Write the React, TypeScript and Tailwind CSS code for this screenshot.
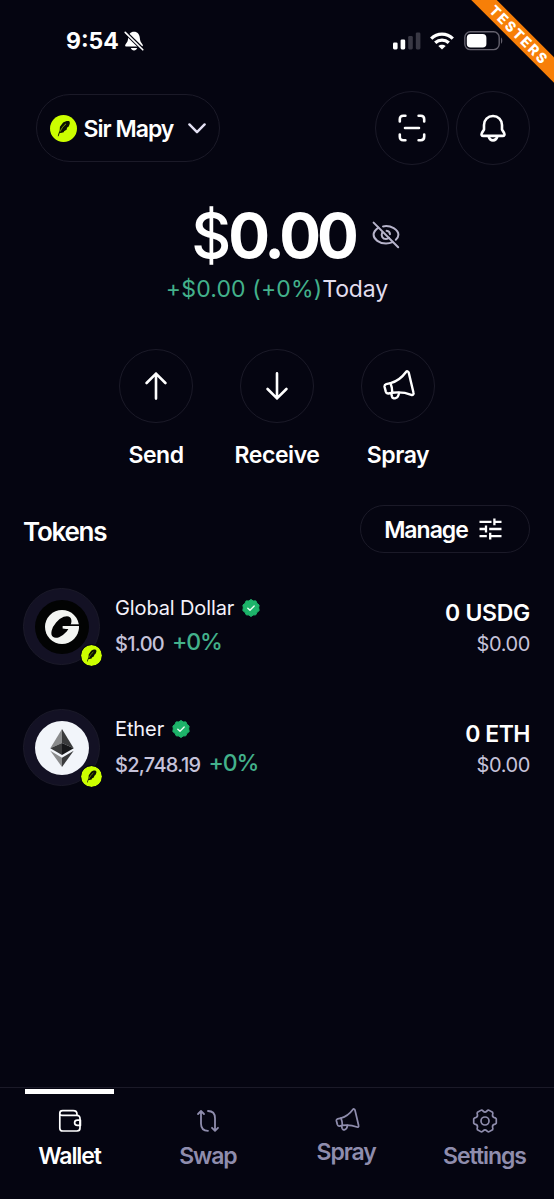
import React from "react";

type IconProps = { className?: string };

const FeatherBadge: React.FC<IconProps> = ({ className }) => (
  <svg viewBox="0 0 28 28" className={className}>
    <circle cx="14" cy="14" r="14" fill="#ccff00" />
    <path
      d="M8 22C8.5 19.8 9.2 17.8 10 16L10.3 12.2L13.6 7.8C15.2 6.6 17.4 6 19.4 6.2C20.5 6.4 20.7 7.6 20.5 9L19.4 11.8L17.6 13.2L17.4 15L14.6 16.8L14.2 18L11.2 18.6L10.2 18.4L8.8 22Z"
      fill="#0b0f00"
    />
    <path d="M10.6 17.2C12 13.8 13.8 11.4 16.6 9.2" fill="none" stroke="#ccff00" strokeWidth="0.6" />
  </svg>
);

const MegaphoneIcon: React.FC<IconProps & { stroke: number }> = ({ className, stroke }) => (
  <svg
    viewBox="0 0 32 30"
    className={className}
    fill="none"
    stroke="currentColor"
    strokeWidth={stroke}
    strokeLinecap="round"
    strokeLinejoin="round"
  >
    <path d="M7.5 13.1C14 11.5 19 7.5 23 2C23.8 .9 25.3 1.1 25.7 2.5L30.5 22.8C30.9 24.3 29.8 25.3 28.3 24.8C22.5 22.6 16 21.9 9.3 22.8L5.4 23.5C4 23.7 3.2 23 2.8 21.6L1.6 17C1.3 15.4 1.8 14.5 3.2 14.1Z" />
    <path d="M7.5 13.2C8.7 16 9.3 19 9.3 22.6" />
    <path d="M8.2 23.3L9 26.6C9.4 28.1 11 28.7 12.5 28.2C14.5 27.6 15.6 26 16 22.8" />
  </svg>
);

const VerifiedIcon: React.FC = () => (
  <svg viewBox="0 0 18 18" className="size-[18px]">
    <path
      d="M9 .5L11.2 1.9L13.9 1.9L15 4.4L17.1 6.1L16.7 8.9L17.2 11.6L15 13.3L13.8 15.8L11.1 16L9 17.5L6.9 16L4.2 15.8L3 13.3L.8 11.6L1.3 8.9L.9 6.1L3 4.4L4.1 1.9L6.8 1.9Z"
      fill="#1db46a"
      stroke="#1db46a"
      strokeLinejoin="round"
    />
    <path d="M5.8 9.2L8 11.2L12.2 7" fill="none" stroke="#e8fff2" strokeWidth="1.4" strokeLinecap="round" strokeLinejoin="round" />
  </svg>
);

const DollarLogo: React.FC = () => (
  <svg viewBox="0 0 54 54" className="size-[54px]">
    <circle cx="27" cy="27" r="27" fill="#020303" />
    <circle cx="27" cy="27" r="17" fill="#f3f5f2" />
    <ellipse cx="26.4" cy="27" rx="13" ry="7" transform="rotate(-49 26.4 27)" fill="#020303" />
    <path d="M28 24.3H45V26.1H28Z" fill="#020303" />
    <path d="M27.6 26.1H44L43.4 29H31L27.6 28.4Z" fill="#f3f5f2" />
  </svg>
);

const EtherLogo: React.FC = () => (
  <svg viewBox="0 0 54 54" className="size-[54px]">
    <circle cx="27" cy="27" r="27" fill="#f2f5fa" />
    <path d="M27 8L15.3 27.2L27 22Z" fill="#8a8b8c" />
    <path d="M27 8L38.7 27.2L27 22Z" fill="#3a3b3c" />
    <path d="M15.3 27.2L27 22V34Z" fill="#3a3b3c" />
    <path d="M38.7 27.2L27 22V34Z" fill="#17181a" />
    <path d="M15.3 29.8L27 36.7V46Z" fill="#8a8b8c" />
    <path d="M38.7 29.8L27 36.7V46Z" fill="#3a3b3c" />
  </svg>
);

const WalletIcon: React.FC = () => (
  <svg viewBox="0 0 24 24" className="size-6" fill="none" stroke="currentColor" strokeWidth="1.7" strokeLinecap="round" strokeLinejoin="round">
    <path d="M1.8 4.2V19.2C1.8 21 3 22 4.8 22H19C21 22 22 20.8 22 19V9.6C22 7.6 21 6.4 19 6.4H4C2.6 6.4 1.8 5.4 1.8 4.2C1.8 2.6 3 1.6 4.6 1.6H15.2C17.6 1.6 19 3 19 5.2V6.4" />
    <path d="M22.4 11.2H19.4C17.6 11.2 16.6 12.3 16.6 13.8S17.6 16.4 19.4 16.4H22.4Z" />
  </svg>
);

const SwapIcon: React.FC = () => (
  <svg viewBox="0 0 24 24" className="size-6" fill="none" stroke="currentColor" strokeWidth="1.8" strokeLinecap="round" strokeLinejoin="round">
    <path d="M2 5L5 2L8 5M5 2.4V14.5C5 19 7.6 21.8 12 21.8" />
    <path d="M16 18.8L19 21.8L22 18.8M19 21.4V9.3C19 4.8 16.4 2 12 2" />
  </svg>
);

// six rounded lobes, one every 60 degrees
const gearPath = () => {
  const at = (deg: number, r: number) => {
    const a = (deg * Math.PI) / 180;
    return `${(12 + r * Math.cos(a)).toFixed(2)} ${(12 + r * Math.sin(a)).toFixed(2)}`;
  };
  let d = `M${at(-11, 11.5)}`;
  for (let deg = 0; deg < 360; deg += 60) {
    d += `L${at(deg + 11, 11.5)}`;
    d += `Q${at(deg + 17, 11.2)} ${at(deg + 20, 9.9)}`;
    d += `Q${at(deg + 30, 8.2)} ${at(deg + 40, 9.9)}`;
    d += `Q${at(deg + 43, 11.2)} ${at(deg + 49, 11.5)}`;
  }
  return `${d}Z`;
};

const GearIcon: React.FC = () => (
  <svg viewBox="0 0 24 24" className="ml-[2px] size-6 overflow-visible" fill="none" stroke="currentColor" strokeWidth="1.7" strokeLinejoin="round">
    <path d={gearPath()} />
    <circle cx="12" cy="12" r="4" />
  </svg>
);

const StatusBar: React.FC = () => (
  <div className="flex h-[82px] items-center justify-between pr-[51px] pl-[66px]">
    <div className="flex items-center gap-[5px]">
      <span className="pt-px text-[23px] leading-none font-bold">9:54</span>
      <svg viewBox="0 0 20 20" className="size-5" fill="#fff">
        <path d="M10 .8C6.4 .8 4.4 3.5 4.2 6.8C4 10 3.2 11.4 1.6 13.2C.6 14.6 1.2 15.6 2.8 15.6H17.2C18.8 15.6 19.4 14.6 18.4 13.2C16.8 11.4 16 10 15.8 6.8C15.6 3.5 13.6 .8 10 .8Z" />
        <path d="M6.8 17H13.2C12.6 18.6 11.5 19.5 10 19.5S7.4 18.6 6.8 17Z" />
        <path d="M0 0L20 19.6" stroke="#050511" strokeWidth="3.8" />
        <path d="M1.2 1.4L18.8 18.8" stroke="#fff" strokeWidth="1.6" strokeLinecap="round" />
      </svg>
    </div>
    <div className="flex items-center">
      <svg viewBox="0 0 28 18" className="h-[18px] w-7" fill="#fff">
        <rect x="0" y="10.5" width="4.6" height="6.9" rx="1.3" />
        <rect x="7.6" y="7.4" width="4.6" height="10" rx="1.3" />
        <rect x="15.2" y="4" width="4.6" height="13.4" rx="1.3" fill="#393844" />
        <rect x="22.8" y=".4" width="4.6" height="17" rx="1.3" fill="#393844" />
      </svg>
      <svg viewBox="0 0 24 18" className="ml-[9px] h-[18px] w-6" fill="none" stroke="#fff" strokeWidth="3.3">
        <path d="M1.2 6.6C7.4 .6 16.6 .6 22.8 6.6" />
        <path d="M5.2 10.8C9.2 7.2 14.8 7.2 18.8 10.8" />
        <path d="M12 17.6L8.3 14C10.4 12.2 13.6 12.2 15.7 14Z" fill="#fff" stroke="none" />
      </svg>
      <svg viewBox="0 0 39 20" className="ml-[10px] h-5 w-[39px]">
        <rect x=".8" y=".8" width="34.4" height="17.8" rx="5.6" fill="none" stroke="#65626e" strokeWidth="1.4" />
        <rect x="2.8" y="2.9" width="19.6" height="13.6" rx="3.8" fill="#fff" />
        <path d="M37 6.6C38.7 7.6 38.7 11.8 37 12.8Z" fill="#65626e" />
      </svg>
    </div>
  </div>
);

const CircleButton: React.FC<{ label: string; children: React.ReactNode }> = ({ label, children }) => (
  <button
    type="button"
    aria-label={label}
    className="flex size-[74px] items-center justify-center rounded-full border-[1.5px] border-[#1b1a28]"
  >
    {children}
  </button>
);

const tokens = [
  { name: "Global Dollar", price: "$1.00", amount: "0 USDG", logo: <DollarLogo />, nameClass: "tracking-[-0.12px]", amountClass: "tracking-[-0.3px]" },
  { name: "Ether", price: "$2,748.19", amount: "0 ETH", logo: <EtherLogo />, nameClass: "tracking-[-0.1px]", amountClass: "tracking-[-0.5px]" },
];

const App: React.FC = () => {
  return (
    <div className="relative flex h-[1199px] w-[554px] flex-col overflow-hidden bg-[#050511] font-['Inter',sans-serif] text-white">
      <div className="absolute top-[26px] left-[449px] flex h-[18px] w-[140px] rotate-45 items-center justify-center bg-[#f77f08] text-[14px] leading-none font-extrabold tracking-[1.9px]">
        TESTERS
      </div>

      <StatusBar />

      <header className="mt-[9px] flex h-[74px] items-center justify-between pr-6 pl-9">
        <button
          type="button"
          className="flex h-[68px] w-[184px] items-center rounded-full border-[1.5px] border-[#1b1a28] pl-[12.5px]"
        >
          <FeatherBadge className="size-[27px]" />
          <span className="ml-[7px] w-[90px] pt-[2px] text-[23px] leading-none font-semibold tracking-[-1px] whitespace-nowrap">
            Sir Mapy
          </span>
          <svg viewBox="0 0 18 11" className="ml-[14px] h-[11px] w-[18px]" fill="none" stroke="#e4e1f4" strokeWidth="2.4" strokeLinecap="round" strokeLinejoin="round">
            <path d="M1.4 1.4L9 9.2L16.6 1.4" />
          </svg>
        </button>
        <div className="flex gap-[7px]">
          <CircleButton label="Scan">
            <svg viewBox="0 0 28 28" className="size-7" fill="none" stroke="#fff" strokeWidth="2.6" strokeLinecap="round">
              <path d="M1.8 7.4V5.2C1.8 3 3 1.8 5.2 1.8H7.4M20.6 1.8H22.8C25 1.8 26.2 3 26.2 5.2V7.4M26.2 20.6V22.8C26.2 25 25 26.2 22.8 26.2H20.6M7.4 26.2H5.2C3 26.2 1.8 25 1.8 22.8V20.6M7 14H21" />
            </svg>
          </CircleButton>
          <CircleButton label="Notifications">
            <svg viewBox="0 0 28 28" className="size-7" fill="none" stroke="#fff" strokeWidth="2.6" strokeLinecap="round" strokeLinejoin="round">
              <path d="M14 2C8.8 2 5 5.8 5 11V15.5L2.9 19C2 20.7 2.7 21.9 4.3 21.9H23.7C25.3 21.9 26 20.7 25.1 19L23 15.5V11C23 5.8 19.2 2 14 2Z" />
              <path d="M9.6 22.4C10.4 25.2 12 26.4 14 26.4S17.6 25.2 18.4 22.4" />
            </svg>
          </CircleButton>
        </div>
      </header>

      <section className="mt-[35px] flex h-[70px] items-center justify-center gap-[17px] pl-[37px]">
        <h1 className="pt-px text-[62px] leading-[70px] font-bold tracking-[-4px]">
          <span className="font-medium tracking-[-3px]">$</span>0.00
        </h1>
        <svg viewBox="0 0 28 28" className="size-7" fill="none" stroke="#b7b4cb" strokeWidth="2" strokeLinecap="round">
          <path d="M1.6 1.6L26.2 26.2" />
          <path d="M6.4 6.6C3.6 8.6 1.6 11.2 1.6 13.8C1.6 18.2 7.4 22.6 14 22.6C16.4 22.6 18.6 22.1 20.6 21.2" />
          <path d="M11 5.4C19 3.8 26.4 9 26.4 13.8C26.4 15.6 25.4 17.4 23.8 18.8" />
          <path d="M10.2 11.6C8.8 14.6 10.4 18 14 18C15.2 18 16.2 17.6 17 16.8M14.6 9.8C16.6 10.1 17.8 11.4 18 13.2" />
        </svg>
      </section>
      <p className="mt-[3px] flex h-[32px] items-center justify-center text-[23px] leading-none whitespace-nowrap">
        <span className="tracking-[0.15px] text-[#43b18b]">+$0.00 (+0%)</span>
        <span className="tracking-[-0.1px] text-[#e2deef]">Today</span>
      </p>

      <div className="mt-[44px] flex justify-center gap-[3px]">
        {[
          {
            label: "Send",
            icon: (
              <svg viewBox="0 0 22 28" className="h-7 w-[22px]" fill="none" stroke="#fff" strokeWidth="2.6" strokeLinecap="round" strokeLinejoin="round">
                <path d="M11 26.6V1.6M1.6 11L11 1.6L20.4 11" />
              </svg>
            ),
          },
          {
            label: "Receive",
            icon: (
              <svg viewBox="0 0 22 28" className="h-7 w-[22px]" fill="none" stroke="#fff" strokeWidth="2.6" strokeLinecap="round" strokeLinejoin="round">
                <path d="M11 1.4V26.4M1.6 17L11 26.4L20.4 17" />
              </svg>
            ),
          },
          { label: "Spray", icon: <MegaphoneIcon className="-mt-[3px] ml-[2px] h-[30px] w-8" stroke={2.4} /> },
        ].map((action) => (
          <div key={action.label} className="flex w-[118px] flex-col items-center">
            <CircleButton label={action.label}>{action.icon}</CircleButton>
            <span className="mt-[20px] text-[23px] leading-[24px] font-semibold tracking-[-0.45px]">
              {action.label}
            </span>
          </div>
        ))}
      </div>

      <div className="mt-[38px] flex h-[48px] items-center justify-between px-6">
        <h2 className="-ml-px pt-[5px] text-[26px] leading-none font-semibold tracking-[-1.25px]">Tokens</h2>
        <button
          type="button"
          className="flex h-[48px] w-[170px] items-center rounded-full border-[1.5px] border-[#1b1a28] pl-[23px]"
        >
          <span className="w-[84px] pt-[2px] text-[23px] leading-none font-semibold tracking-[-1px]">Manage</span>
          <svg viewBox="0 0 23 22" className="ml-[11px] h-[22px] w-[23px]" fill="none" stroke="#fff" strokeWidth="2.3">
            <path d="M.5 3.8H12.5M15.4 3.8H22.5M15.4 .4V7.2M.5 11H7M7 7.6V14.4M10.2 11H22.5M.5 18.2H7.8M11.2 18.2H22.5M11.2 14.8V21.6" />
          </svg>
        </button>
      </div>

      <ul className="mt-[35px] flex flex-col gap-[44px] px-6">
        {tokens.map((token) => (
          <li key={token.name} className="flex h-[77px] items-center">
            <div className="relative -ml-px flex size-[77px] items-center justify-center rounded-full border-[1.5px] border-[#1b1a29] bg-[#131124]">
              {token.logo}
              <FeatherBadge className="absolute -right-[4px] -bottom-[3px] size-[23px] rounded-full border-[1.5px] border-[#050511]" />
            </div>
            <div className="-mt-[2px] ml-[15px] flex flex-1 flex-col">
              <div className="flex h-[34px] items-center gap-[8px]">
                <span className={`text-[20px] leading-none text-[#f4f2fb] ${token.nameClass}`}>{token.name}</span>
                <VerifiedIcon />
              </div>
              <div className="flex h-[36px] items-center gap-[8px]">
                <span className="pt-[2px] text-[20px] leading-none font-medium tracking-[-0.7px] text-[#c5c2da]">
                  {token.price}
                </span>
                <span className="text-[23px] leading-none font-medium tracking-[-1.1px] text-[#43b18b]">+0%</span>
              </div>
            </div>
            <div className="flex flex-col items-end pt-[3px]">
              <span className={`text-[23px] leading-[32px] font-semibold ${token.amountClass}`}>{token.amount}</span>
              <span className="text-[20px] leading-[30px] tracking-[-0.4px] text-[#c5c2da]">$0.00</span>
            </div>
          </li>
        ))}
      </ul>

      <nav className="mt-auto flex h-[112px] justify-between border-t-[1.5px] border-[#1b1a28] px-[25px] text-[#8f8dad]">
        {[
          { label: "Wallet", icon: <WalletIcon />, active: true, labelClass: "mt-[11px] tracking-[-1.1px]" },
          { label: "Swap", icon: <SwapIcon />, active: false, labelClass: "mt-[11px] tracking-[-1.1px]" },
          { label: "Spray", icon: <MegaphoneIcon className="ml-[2px] -mt-px h-[23px] w-[25px]" stroke={2.3} />, active: false, labelClass: "mt-[9px] tracking-[-1.1px]" },
          { label: "Settings", icon: <GearIcon />, active: false, labelClass: "mt-[11px] tracking-[-1.05px]" },
        ].map((tab) => (
          <a key={tab.label} className={`flex w-[89px] flex-col items-center ${tab.active ? "text-white" : ""}`}>
            <span className={`mt-px h-[5px] w-full ${tab.active ? "bg-white" : ""}`} />
            <span className="mt-[15px]">{tab.icon}</span>
            <span className={`text-[23px] leading-[24px] font-semibold whitespace-nowrap ${tab.labelClass}`}>
              {tab.label}
            </span>
          </a>
        ))}
      </nav>
    </div>
  );
};

export default App;
